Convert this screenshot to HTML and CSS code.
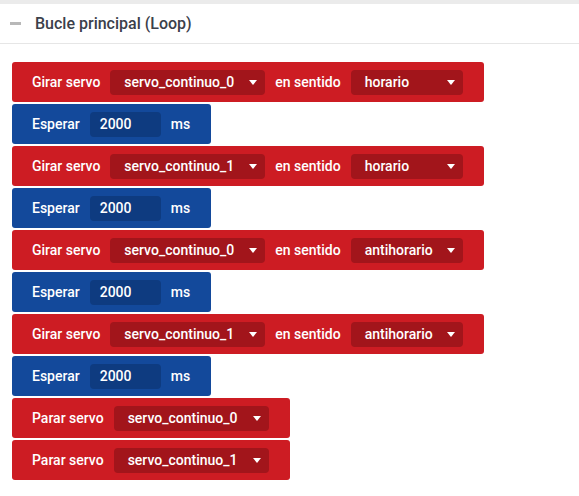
FILE: index.html
```html
<!DOCTYPE html>
<html lang="es">
<head>
<meta charset="utf-8">
<title>Bucle principal (Loop)</title>
<link rel="stylesheet" href="styles.css">
</head>
<body>
<div class="topbar"></div>
<header class="header">
  <span class="minus"></span>
  <h1 class="title">Bucle principal (Loop)</h1>
</header>
<main class="blocks">
  <div class="block red">
    <span class="label">Girar servo</span>
    <span class="dd dd-servo"><span>servo_continuo_0</span><i class="arrow"></i></span>
    <span class="label">en sentido</span>
    <span class="dd dd-dir"><span>horario</span><i class="arrow"></i></span>
  </div>
  <div class="block blue">
    <span class="label">Esperar</span>
    <span class="num">2000</span>
    <span class="label">ms</span>
  </div>
  <div class="block red">
    <span class="label">Girar servo</span>
    <span class="dd dd-servo"><span>servo_continuo_1</span><i class="arrow"></i></span>
    <span class="label">en sentido</span>
    <span class="dd dd-dir"><span>horario</span><i class="arrow"></i></span>
  </div>
  <div class="block blue">
    <span class="label">Esperar</span>
    <span class="num">2000</span>
    <span class="label">ms</span>
  </div>
  <div class="block red">
    <span class="label">Girar servo</span>
    <span class="dd dd-servo"><span>servo_continuo_0</span><i class="arrow"></i></span>
    <span class="label">en sentido</span>
    <span class="dd dd-dir"><span>antihorario</span><i class="arrow"></i></span>
  </div>
  <div class="block blue">
    <span class="label">Esperar</span>
    <span class="num">2000</span>
    <span class="label">ms</span>
  </div>
  <div class="block red">
    <span class="label">Girar servo</span>
    <span class="dd dd-servo"><span>servo_continuo_1</span><i class="arrow"></i></span>
    <span class="label">en sentido</span>
    <span class="dd dd-dir"><span>antihorario</span><i class="arrow"></i></span>
  </div>
  <div class="block blue">
    <span class="label">Esperar</span>
    <span class="num">2000</span>
    <span class="label">ms</span>
  </div>
  <div class="block red">
    <span class="label">Parar servo</span>
    <span class="dd dd-servo"><span>servo_continuo_0</span><i class="arrow"></i></span>
  </div>
  <div class="block red">
    <span class="label">Parar servo</span>
    <span class="dd dd-servo"><span>servo_continuo_1</span><i class="arrow"></i></span>
  </div>
</main>
</body>
</html>
```
FILE: styles.css
```css
* { box-sizing: border-box; }
html, body { margin: 0; padding: 0; background: #fff; }
body { font-family: Roboto, "Liberation Sans", sans-serif; }

.topbar { height: 4px; background: #ebebeb; }

.header {
  height: 40px;
  display: flex;
  align-items: center;
  border-bottom: 1px solid #e6e6e6;
  padding-left: 10px;
}
.minus {
  width: 11px;
  height: 3px;
  background: #b8b8b8;
  margin-right: 14px;
}
.title {
  margin: 0;
  font-size: 16px;
  font-weight: 500;
  color: #3b404a;
}

.blocks {
  display: flex;
  flex-direction: column;
  align-items: flex-start;
  gap: 2px;
  padding: 18px 0 0 12px;
}
.block {
  height: 40px;
  display: flex;
  align-items: center;
  gap: 10px;
  padding: 0 21px 0 20px;
  border-radius: 3px;
  color: #fff;
  font-size: 14px;
  font-weight: 500;
}
.red { background: #cd1c23; }
.blue { background: #13499b; }

.dd {
  height: 25px;
  display: flex;
  align-items: center;
  justify-content: space-between;
  padding: 0 8px 0 14px;
  border-radius: 4px;
  background: #a2151b;
}
.dd-servo { width: 155px; }
.dd-dir { width: 112px; }
.arrow {
  width: 0;
  height: 0;
  border-left: 4px solid transparent;
  border-right: 4px solid transparent;
  border-top: 5px solid #fff;
}
.num {
  width: 71px;
  height: 25px;
  display: flex;
  align-items: center;
  padding-left: 10px;
  border-radius: 4px;
  background: #0e3b80;
}
```
